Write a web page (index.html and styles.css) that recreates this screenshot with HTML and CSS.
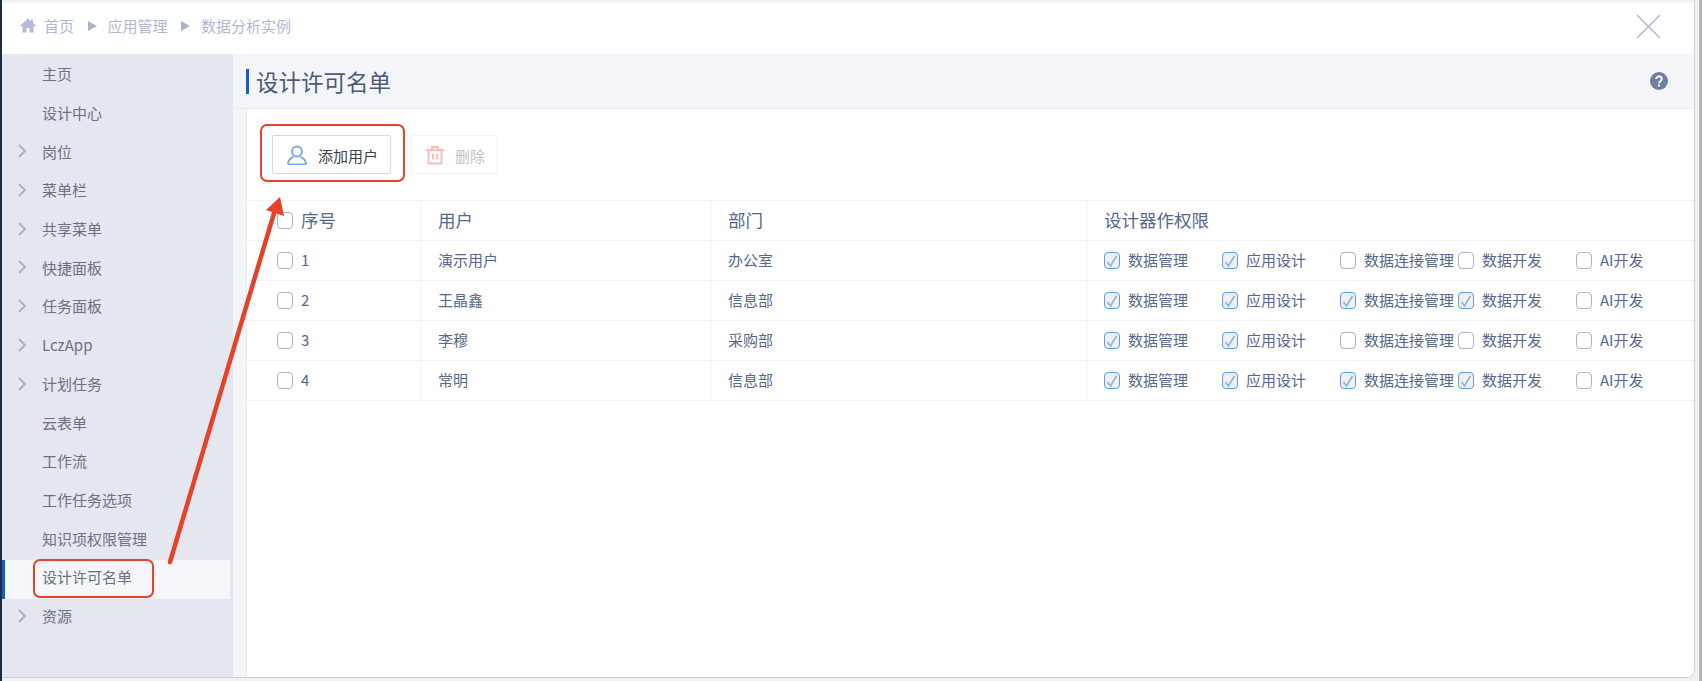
FILE: index.html
```html
<!DOCTYPE html>
<html lang="zh-CN">
<head>
    <meta charset="UTF-8">
    <meta name="viewport" content="width=device-width, initial-scale=1.0">
    <title>设计许可名单</title>
    <link rel="stylesheet" href="styles.css">
</head>
<body>
    <svg class="defs" width="0" height="0">
        <symbol id="chevron" viewBox="0 0 8 14"><path d="M1 1l6 6-6 6" fill="none" stroke="#a3b1bf" stroke-width="1.8"/></symbol>
        <symbol id="tick" viewBox="0 0 16 17"><path d="M3.500 10l3 4 6-10" fill="none" stroke="#a2b3c6" stroke-width="1.800"/></symbol>
        <symbol id="arrow" viewBox="0 0 9 10"><path d="M0 0l9 5-9 5z" fill="#a9b4d2"/></symbol>
    </svg>
    <div class="page">
        <div class="window">
            <header class="topbar">
                <nav class="crumbs">
                    <svg class="home" viewBox="0 0 16 14" width="16" height="15"><path d="M8 0L0 7.200l1 1.100L2.500 7v7h4V9.500h3V14h4V7L15 8.300l1-1.100-3-2.700V1h-2v1.700z" fill="#b3bcd6"/></svg>
                    <span>首页</span>
                    <svg class="sep" width="9" height="10"><use href="#arrow"/></svg>
                    <span>应用管理</span>
                    <svg class="sep" width="9" height="10"><use href="#arrow"/></svg>
                    <span>数据分析实例</span>
                </nav>
                <svg class="close" viewBox="0 0 26 26" width="25" height="25"><path d="M1 1l24 24M25 1L1 25" stroke="#b5b9d6" stroke-width="1.600" fill="none"/></svg>
            </header>
            <div class="main">
                <aside class="sidebar">
                    <a class="menu-item">主页</a>
                    <a class="menu-item">设计中心</a>
                    <a class="menu-item"><svg class="chev" width="8" height="14"><use href="#chevron"/></svg>岗位</a>
                    <a class="menu-item"><svg class="chev" width="8" height="14"><use href="#chevron"/></svg>菜单栏</a>
                    <a class="menu-item"><svg class="chev" width="8" height="14"><use href="#chevron"/></svg>共享菜单</a>
                    <a class="menu-item"><svg class="chev" width="8" height="14"><use href="#chevron"/></svg>快捷面板</a>
                    <a class="menu-item"><svg class="chev" width="8" height="14"><use href="#chevron"/></svg>任务面板</a>
                    <a class="menu-item"><svg class="chev" width="8" height="14"><use href="#chevron"/></svg>LczApp</a>
                    <a class="menu-item"><svg class="chev" width="8" height="14"><use href="#chevron"/></svg>计划任务</a>
                    <a class="menu-item">云表单</a>
                    <a class="menu-item">工作流</a>
                    <a class="menu-item">工作任务选项</a>
                    <a class="menu-item">知识项权限管理</a>
                    <a class="menu-item active">设计许可名单</a>
                    <a class="menu-item"><svg class="chev" width="8" height="14"><use href="#chevron"/></svg>资源</a>
                </aside>
                <section class="content">
                    <div class="title-bar">
                        <h1>设计许可名单</h1>
                        <svg class="help" viewBox="0 0 18 18" width="18" height="18">
                            <circle cx="9" cy="9" r="9" fill="#6d7fa3"/>
                            <path d="M6.200 7a2.800 2.600 0 1 1 4.300 2.200C9.500 9.900 9 10.300 9 11.300" fill="none" stroke="#fff" stroke-width="2"/>
                            <rect x="8" y="12.500" width="2" height="2" fill="#fff"/>
                        </svg>
                    </div>
                    <div class="panel">
                        <div class="toolbar">
                            <button class="btn">
                                <svg viewBox="0 0 20 20" width="20" height="20"><circle cx="10" cy="6.500" r="5" fill="none" stroke="#76a5e8" stroke-width="1.800"/><path d="M1 19.300c0-4 2.500-6.300 5.500-7.500M19 19.300c0-4-2.500-6.300-5.500-7.500M1 19.300h18" fill="none" stroke="#76a5e8" stroke-width="1.800"/></svg>
                                <span class="btn-text">添加用户</span>
                            </button>
                            <button class="btn disabled">
                                <svg viewBox="0 0 20 20" width="20" height="20"><path d="M1 5h18M7 5V2h6v3M3.500 5v13.500h13V5M8 9v5.500M12 9v5.500" fill="none" stroke="#fdbcbc" stroke-width="2"/></svg>
                                <span class="btn-text">删除</span>
                            </button>
                        </div>
                        <div class="grid">
                            <div class="row head">
                                <div class="cell no"><span class="box"></span>序号</div>
                                <div class="cell user">用户</div>
                                <div class="cell dept">部门</div>
                                <div class="cell perms">设计器作权限</div>
                            </div>
                            <div class="row">
                                <div class="cell no"><span class="box"></span>1</div>
                                <div class="cell user">演示用户</div>
                                <div class="cell dept">办公室</div>
                                <div class="cell perms">
                                    <label class="perm"><span class="box on"><svg width="16" height="17"><use href="#tick"/></svg></span>数据管理</label>
                                    <label class="perm"><span class="box on"><svg width="16" height="17"><use href="#tick"/></svg></span>应用设计</label>
                                    <label class="perm"><span class="box"></span>数据连接管理</label>
                                    <label class="perm"><span class="box"></span>数据开发</label>
                                    <label class="perm"><span class="box"></span>AI开发</label>
                                </div>
                            </div>
                            <div class="row">
                                <div class="cell no"><span class="box"></span>2</div>
                                <div class="cell user">王晶鑫</div>
                                <div class="cell dept">信息部</div>
                                <div class="cell perms">
                                    <label class="perm"><span class="box on"><svg width="16" height="17"><use href="#tick"/></svg></span>数据管理</label>
                                    <label class="perm"><span class="box on"><svg width="16" height="17"><use href="#tick"/></svg></span>应用设计</label>
                                    <label class="perm"><span class="box on"><svg width="16" height="17"><use href="#tick"/></svg></span>数据连接管理</label>
                                    <label class="perm"><span class="box on"><svg width="16" height="17"><use href="#tick"/></svg></span>数据开发</label>
                                    <label class="perm"><span class="box"></span>AI开发</label>
                                </div>
                            </div>
                            <div class="row">
                                <div class="cell no"><span class="box"></span>3</div>
                                <div class="cell user">李穆</div>
                                <div class="cell dept">采购部</div>
                                <div class="cell perms">
                                    <label class="perm"><span class="box on"><svg width="16" height="17"><use href="#tick"/></svg></span>数据管理</label>
                                    <label class="perm"><span class="box on"><svg width="16" height="17"><use href="#tick"/></svg></span>应用设计</label>
                                    <label class="perm"><span class="box"></span>数据连接管理</label>
                                    <label class="perm"><span class="box"></span>数据开发</label>
                                    <label class="perm"><span class="box"></span>AI开发</label>
                                </div>
                            </div>
                            <div class="row">
                                <div class="cell no"><span class="box"></span>4</div>
                                <div class="cell user">常明</div>
                                <div class="cell dept">信息部</div>
                                <div class="cell perms">
                                    <label class="perm"><span class="box on"><svg width="16" height="17"><use href="#tick"/></svg></span>数据管理</label>
                                    <label class="perm"><span class="box on"><svg width="16" height="17"><use href="#tick"/></svg></span>应用设计</label>
                                    <label class="perm"><span class="box on"><svg width="16" height="17"><use href="#tick"/></svg></span>数据连接管理</label>
                                    <label class="perm"><span class="box on"><svg width="16" height="17"><use href="#tick"/></svg></span>数据开发</label>
                                    <label class="perm"><span class="box"></span>AI开发</label>
                                </div>
                            </div>
                        </div>
                    </div>
                </section>
            </div>
        </div>
    </div>

    <!-- red annotations drawn over the screenshot -->
    <div class="mark mark-add"></div>
    <div class="mark mark-menu"></div>
    <svg class="pointer" width="1702" height="681">
        <path d="M170 562L275 210" stroke="#e8412a" stroke-width="4.500" stroke-linecap="round" fill="none"/>
        <path d="M280 197L266 210L284 216z" fill="#e8412a"/>
    </svg>
</body>
</html>
```

FILE: styles.css
```css
html, body {
    margin: 0;
    height: 100%;
    overflow: hidden;
}
body {
    font-family: "Noto Sans CJK SC", "Noto Sans", sans-serif;
    font-size: 15px;
    position: relative;
}
.defs {
    position: absolute;
}
.page {
    height: 681px;
    box-sizing: border-box;
    padding-right: 4px;
    background: #f1f1f1;
    border-left: 2px solid #1d2c41;
    border-right: 3px solid #b3b3b3;
}
.window {
    height: 678px;
    box-sizing: border-box;
    display: flex;
    flex-direction: column;
    overflow: hidden;
    background: #fff;
    border-right: 1px solid #cfcfcf;
    border-bottom: 1px solid #cfcfcf;
    border-bottom-right-radius: 8px;
}
.topbar {
    height: 54px;
    flex: none;
    box-sizing: border-box;
    display: flex;
    align-items: center;
    justify-content: space-between;
    padding: 0 33px 0 18px;
    background: linear-gradient(#ececec, #fff 4px);
}
.crumbs {
    display: flex;
    align-items: center;
    padding-bottom: 3px;
    color: #afb8d0;
}
.home {
    margin-right: 8px;
}
.sep {
    margin: 0 11px 0 13.500px;
}
.close {
    margin-bottom: 2px;
}
.main {
    flex: 1;
    display: flex;
    min-height: 0;
}
.sidebar {
    width: 231px;
    flex: none;
    padding-top: 3px;
    box-sizing: border-box;
    background: #e4e7f0;
}
.menu-item {
    display: flex;
    align-items: center;
    height: 38.700px;
    box-sizing: border-box;
    padding: 0 0 5px 40px;
    position: relative;
    color: #6a7282;
}
.menu-item.active {
    width: 228px;
    padding-left: 37px;
    background: #f4f6fa;
    border-left: 3px solid #0a64c8;
}
.chev {
    position: absolute;
    left: 16px;
    top: 10px;
}
.content {
    flex: 1;
    min-width: 0;
    display: flex;
    flex-direction: column;
    background: #f3f5f9;
}
.title-bar {
    height: 55px;
    flex: none;
    box-sizing: border-box;
    display: flex;
    align-items: center;
    justify-content: space-between;
    padding: 0 26px 0 13px;
    border-bottom: 1px solid #e8ebf2;
}
h1 {
    margin: 0;
    font-size: 22.500px;
    font-weight: 400;
    line-height: 25px;
    padding-left: 7px;
    color: #4a5a78;
    border-left: 3px solid #0a64c8;
}
.panel {
    flex: 1;
    margin-left: 13px;
    background: #fff;
    border-left: 1px solid #e8ebf2;
}
.toolbar {
    height: 91px;
    box-sizing: border-box;
    display: flex;
    gap: 19px;
    padding: 26px 0 0 25px;
}
.btn {
    height: 39px;
    display: flex;
    align-items: center;
    gap: 11px;
    padding: 0 12px 0 14px;
    font: inherit;
    font-size: 15px;
    color: #3a3f4a;
    background: #fff;
    border: 1px solid #d3d9e6;
    border-radius: 2px;
}
.btn-text {
    position: relative;
    top: 1px;
}
.btn.disabled {
    gap: 10px;
    color: #bfc3c9;
    border-color: #f1f2f5;
}
.grid {
    border-top: 1px solid #f0f2f7;
    color: #55688f;
}
.row {
    display: grid;
    grid-template-columns: 174px 290px 376px 1fr;
    height: 40px;
    box-sizing: border-box;
    border-bottom: 1px solid #f0f2f7;
}
.head {
    font-size: 17.500px;
}
.cell {
    display: flex;
    align-items: center;
    padding-bottom: 2px;
    box-sizing: border-box;
    border-right: 1px solid #f0f2f7;
}
.cell:last-child {
    border-right: 0;
}
.no {
    padding-left: 30px;
}
.user {
    padding-left: 17px;
}
.dept {
    padding-left: 17px;
}
.perms {
    padding-left: 17px;
}
.box {
    width: 16px;
    height: 17px;
    flex: none;
    box-sizing: border-box;
    position: relative;
    top: 1px;
    margin-right: 8px;
    background: #fff;
    border: 1px solid #a9b3d2;
    border-radius: 4px;
}
.box.on {
    background: #edf1f7;
    border-color: #5e9ce8;
}
.box svg {
    position: absolute;
    left: -1px;
    top: -1px;
}
.perm {
    width: 118px;
    flex: none;
    display: flex;
    align-items: center;
    white-space: nowrap;
}
.mark {
    position: absolute;
    box-sizing: border-box;
    border: 2px solid #e8412a;
    border-radius: 7px;
}
.mark-add {
    left: 260px;
    top: 124px;
    width: 145px;
    height: 58px;
}
.mark-menu {
    left: 33px;
    top: 559px;
    width: 121px;
    height: 39px;
}
.pointer {
    position: absolute;
    left: 0;
    top: 0;
    pointer-events: none;
}
```
